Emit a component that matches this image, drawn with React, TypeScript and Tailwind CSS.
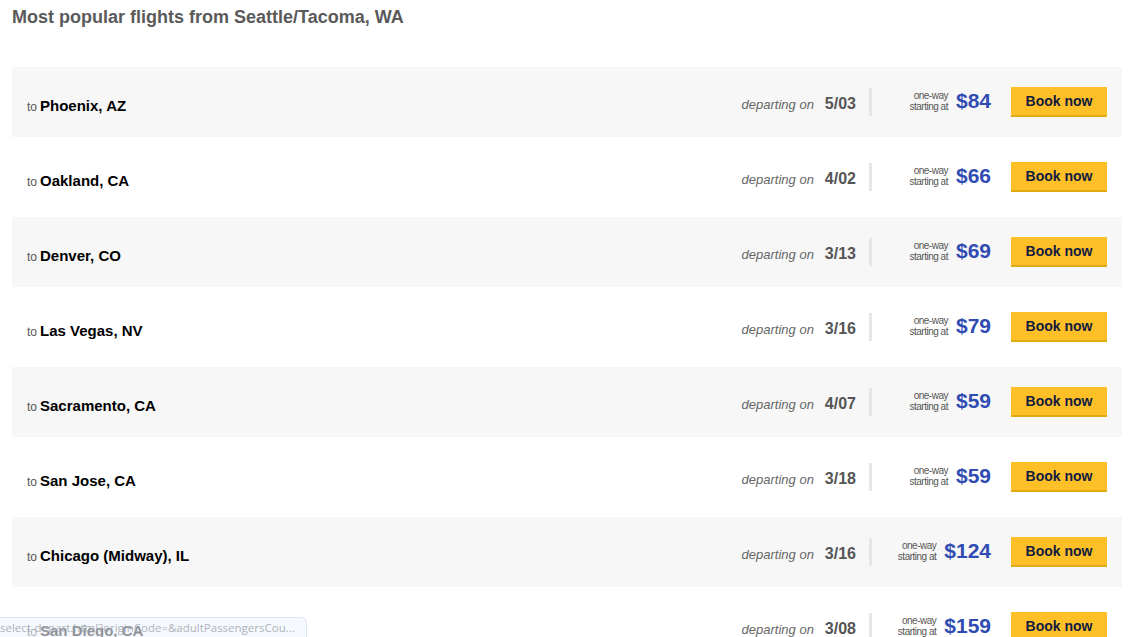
import React from "react";

type Flight = { city: string; date: string; price: string };

const FLIGHTS: Flight[] = [
  { city: "Phoenix, AZ", date: "5/03", price: "$84" },
  { city: "Oakland, CA", date: "4/02", price: "$66" },
  { city: "Denver, CO", date: "3/13", price: "$69" },
  { city: "Las Vegas, NV", date: "3/16", price: "$79" },
  { city: "Sacramento, CA", date: "4/07", price: "$59" },
  { city: "San Jose, CA", date: "3/18", price: "$59" },
  { city: "Chicago (Midway), IL", date: "3/16", price: "$124" },
  { city: "San Diego, CA", date: "3/08", price: "$159" },
];

function FlightRow({ flight, shaded }: { flight: Flight; shaded: boolean }) {
  return (
    <div
      className={`flex items-center h-[70px] mb-[5px] pl-[15px] pr-[15px] ${shaded ? "bg-[#f7f7f7]" : ""}`}
    >
      <div className="flex-1 flex items-baseline gap-[3px] pt-[9px]">
        <span className="text-[12px] text-[#555]">to</span>
        <span className="text-[15px] font-bold text-black">{flight.city}</span>
      </div>
      <div className="flex items-baseline gap-[11px] pt-[4px]">
        <span className="text-[13px] italic text-[#666]">departing on</span>
        <span className="text-[16px] font-bold text-[#555]">{flight.date}</span>
      </div>
      <div className="ml-[13px] w-[3px] h-[28px] bg-[#e6e6e6]" />
      <div className="w-[119px] flex items-center justify-end gap-[8px]">
        <div className="text-right text-[10px] leading-[11px] text-[#555] tracking-[-0.5px] pb-[2px]">
          one-way
          <br />
          starting at
        </div>
        <span className="text-[21px] font-bold text-[#304cb2] leading-none pb-[4px]">{flight.price}</span>
      </div>
      <button className="ml-[20px] w-[96px] h-[30px] bg-[#ffbf27] border-b-2 border-[#e0aa12] text-[14px] font-bold text-[#111b40] pt-[1px]">
        Book now
      </button>
    </div>
  );
}

export default function App() {
  return (
    <div className="relative w-[1139px] h-[637px] overflow-hidden bg-white font-['Liberation_Sans',Arial,sans-serif]">
      <h1 className="pl-[12px] pt-[7px] text-[18px] font-bold text-[#5a5a5a] leading-[21px]">
        Most popular flights from Seattle/Tacoma, WA
      </h1>
      <div className="mx-[12px] mt-[39px] w-[1110px]">
        {FLIGHTS.map((f, i) => (
          <FlightRow key={f.city} flight={f} shaded={i % 2 === 0} />
        ))}
      </div>
      <div className="absolute left-0 bottom-0 w-[307px] h-[20px] bg-[#eef3fb]/60 border-t border-r border-[#dfe6f2] rounded-tr-[6px] overflow-hidden whitespace-nowrap text-[11.5px] leading-[19px] text-[#9aa0aa]/80 font-['Open_Sans',sans-serif]">
        select-depart.html?originCode=&amp;adultPassengersCou...
      </div>
    </div>
  );
}
